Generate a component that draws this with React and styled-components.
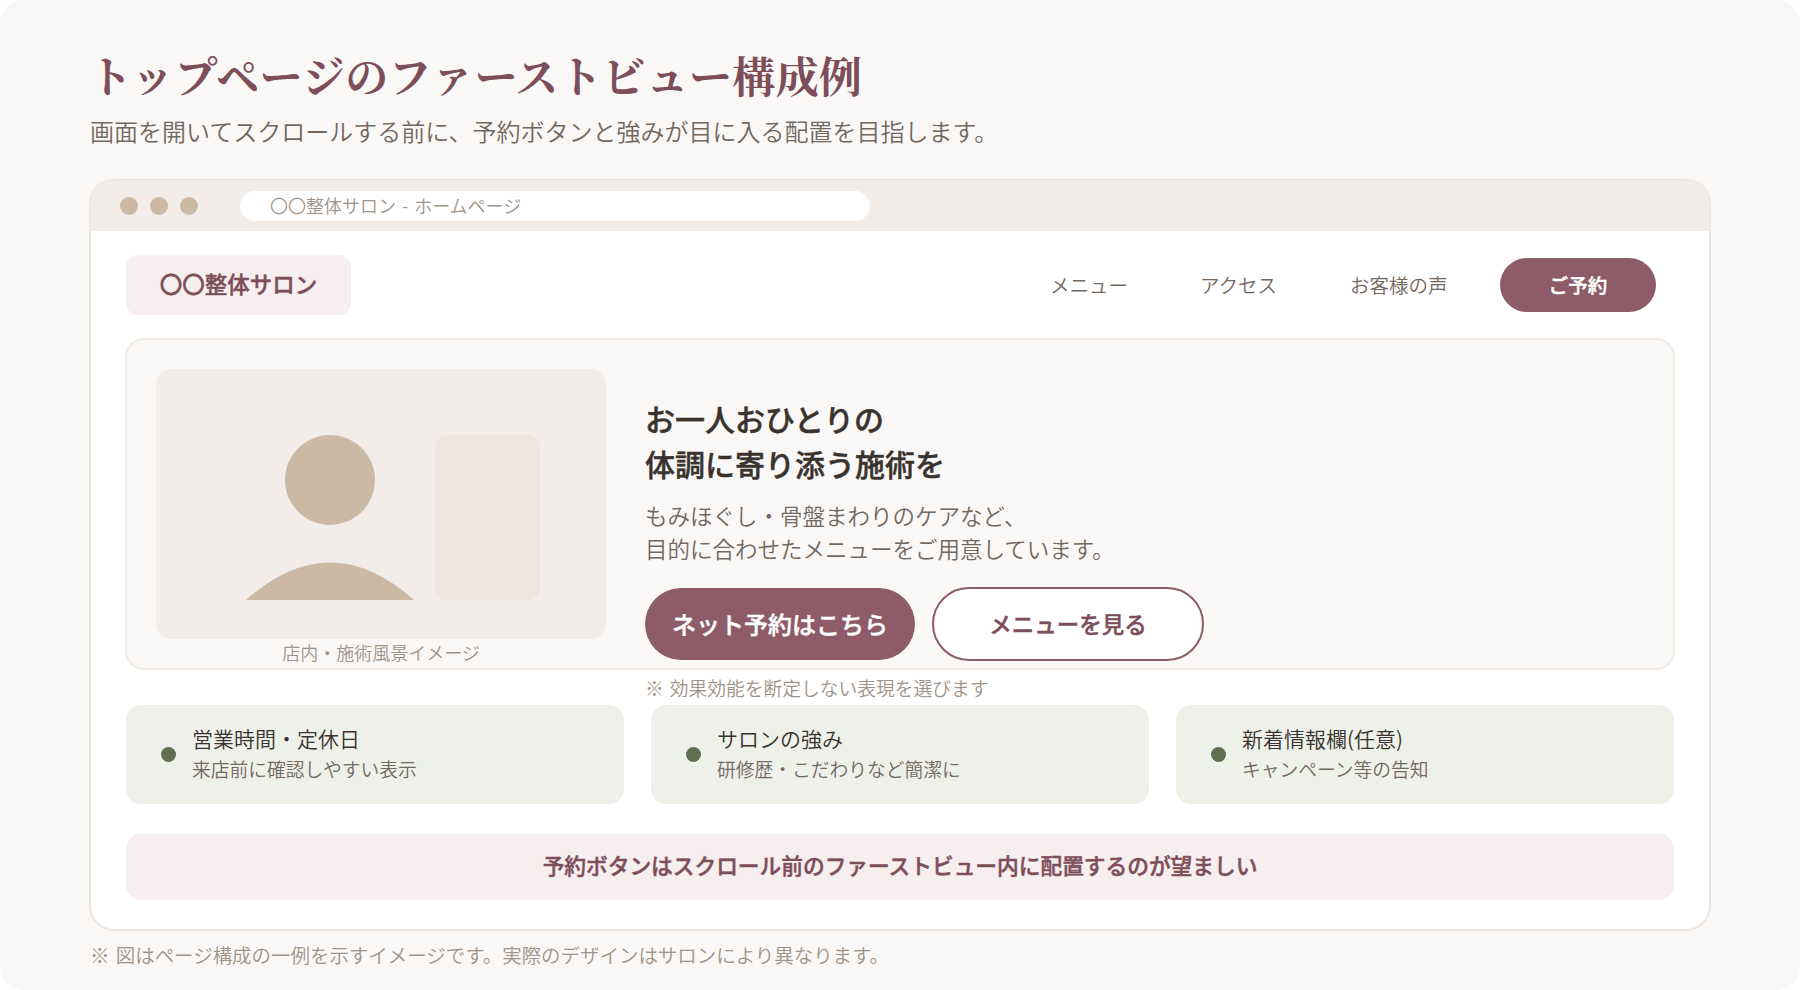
import React from "react";
import styled, { createGlobalStyle, css } from "styled-components";

const cards = [
  { title: "営業時間・定休日", text: "来店前に確認しやすい表示" },
  { title: "サロンの強み", text: "研修歴・こだわりなど簡潔に" },
  { title: "新着情報欄(任意)", text: "キャンペーン等の告知" },
];

const menus = ["メニュー", "アクセス", "お客様の声"];

function App() {
  return (
    <>
      <GlobalStyle />
      <Container>
        <Title>トップページのファーストビュー構成例</Title>
        <SubTitle>画面を開いてスクロールする前に、予約ボタンと強みが目に入る配置を目指します。</SubTitle>

        <Browser>
          <BrowserBar>
            <Dot />
            <Dot />
            <Dot />
            <AddressBar>〇〇整体サロン - ホームページ</AddressBar>
          </BrowserBar>

          <Header>
            <Logo>〇〇整体サロン</Logo>
            <Nav>
              {menus.map((m) => (
                <NavItem key={m}>{m}</NavItem>
              ))}
              <ReserveButton>ご予約</ReserveButton>
            </Nav>
          </Header>

          <Hero>
            <Figure>
              <Photo viewBox="0 0 450 270">
                <circle cx="174" cy="111" r="45" fill="#cbb8a5" />
                <path d="M90 231 Q174 156 258 231 Z" fill="#cbb8a5" />
                <rect x="279" y="66" width="105" height="165" rx="12" fill="#ede5e0" />
              </Photo>
              <Caption>店内・施術風景イメージ</Caption>
            </Figure>
            <HeroBody>
              <Headline>
                お一人おひとりの
                <br />
                体調に寄り添う施術を
              </Headline>
              <Lead>
                もみほぐし・骨盤まわりのケアなど、
                <br />
                目的に合わせたメニューをご用意しています。
              </Lead>
              <Buttons>
                <PillButton $primary>ネット予約はこちら</PillButton>
                <PillButton>メニューを見る</PillButton>
              </Buttons>
              <HeroNote>※ 効果効能を断定しない表現を選びます</HeroNote>
            </HeroBody>
          </Hero>

          <CardList>
            {cards.map((c) => (
              <Card key={c.title}>
                <CardDot />
                <CardBody>
                  <CardTitle>{c.title}</CardTitle>
                  <CardText>{c.text}</CardText>
                </CardBody>
              </Card>
            ))}
          </CardList>

          <Banner>予約ボタンはスクロール前のファーストビュー内に配置するのが望ましい</Banner>
        </Browser>

        <FootNote>※ 図はページ構成の一例を示すイメージです。実際のデザインはサロンにより異なります。</FootNote>
      </Container>
    </>
  );
}

const GlobalStyle = createGlobalStyle`
  * {
    box-sizing: border-box;
  }
  body {
    margin: 0;
    background-color: #ffffff;
    font-family: "Noto Sans CJK JP", sans-serif;
    font-weight: 350;
  }
`;

/* between medium and bold */
const semiBold = css`
  font-weight: 500;
  -webkit-text-stroke: 0.45px currentColor;
`;

const Container = styled.div`
  width: 1800px;
  height: 990px;
  padding: 45px 89px 0;
  background-color: #faf8f6;
  border-radius: 24px;
  overflow: hidden;
  white-space: nowrap;
`;

const Title = styled.h1`
  margin: 0;
  height: 60px;
  line-height: 59px;
  font-family: "Noto Serif CJK JP", "Noto Sans CJK JP", serif;
  font-size: 43px;
  font-weight: 700;
  letter-spacing: 0.35px;
  color: #7d4e5a;
`;

const SubTitle = styled.div`
  margin: 8px 0 30px 1px;
  height: 36px;
  line-height: 36px;
  font-size: 24px;
  color: #73685f;
`;

const Browser = styled.div`
  height: 752px;
  border: 2px solid #ece4de;
  border-radius: 25px;
  background-color: #ffffff;
`;

/* the bar lies on the inner half of the frame line */
const BrowserBar = styled.div`
  display: flex;
  align-items: center;
  gap: 12px;
  height: 51px;
  margin: -1px -1px 0;
  padding-left: 30px;
  border-radius: 24px 24px 0 0;
  background-color: #f2ede8;
`;

const Dot = styled.span`
  width: 18px;
  height: 18px;
  border-radius: 50%;
  background-color: #cbb8a5;
`;

const AddressBar = styled.div`
  width: 630px;
  height: 30px;
  margin-left: 30px;
  padding-left: 30px;
  line-height: 28px;
  border-radius: 15px;
  background-color: #ffffff;
  font-size: 18px;
  word-spacing: 0.11em;
  color: #9e9388;
`;

const Header = styled.div`
  display: flex;
  align-items: center;
  justify-content: space-between;
  margin: 24px 53px 23px 35px;
`;

const Logo = styled.div`
  width: 225px;
  height: 60px;
  line-height: 56px;
  text-align: center;
  border-radius: 12px;
  background-color: #f7eeef;
  font-size: 22.5px;
  ${semiBold}
  color: #7d4e5a;
`;

const Nav = styled.div`
  display: flex;
  align-items: center;
`;

const NavItem = styled.div`
  width: 150px;
  font-size: 19.5px;
  line-height: 54px;
  color: #73685f;
`;

const ReserveButton = styled.div`
  width: 156px;
  height: 54px;
  line-height: 53px;
  text-align: center;
  border-radius: 27px;
  background-color: #8e5c68;
  font-size: 19.5px;
  ${semiBold}
  color: #ffffff;
`;

const Hero = styled.div`
  display: flex;
  gap: 39px;
  height: 332px;
  margin: 0 34px;
  padding: 29px;
  border: 2px solid #f1ebe6;
  border-radius: 19px;
  background-color: #faf8f6;
`;

const Figure = styled.div`
  width: 450px;
`;

const Photo = styled.svg`
  display: block;
  width: 450px;
  height: 270px;
  border-radius: 15px;
  background-color: #f2ede8;
`;

const Caption = styled.div`
  line-height: 26px;
  text-align: center;
  font-size: 18px;
  color: #9e9388;
`;

const HeroBody = styled.div`
  padding-top: 27px;
`;

const Headline = styled.div`
  line-height: 45px;
  font-size: 30px;
  ${semiBold}
  color: #3a322d;
`;

const Lead = styled.div`
  margin-top: 12.5px;
  line-height: 33px;
  font-size: 22.5px;
  color: #73685f;
`;

const Buttons = styled.div`
  display: flex;
  align-items: center;
  gap: 17px;
  margin-top: 22.5px;
`;

const PillButton = styled.div`
  display: flex;
  align-items: center;
  justify-content: center;
  width: ${(props) => (props.$primary ? "270px" : "272px")};
  height: ${(props) => (props.$primary ? "72px" : "74px")};
  padding-bottom: 2px;
  border: ${(props) => (props.$primary ? "0" : "2px solid #8e5c68")};
  border-radius: 37px;
  background-color: ${(props) => (props.$primary ? "#8e5c68" : "#ffffff")};
  font-size: ${(props) => (props.$primary ? "24px" : "22.5px")};
  ${semiBold}
  color: ${(props) => (props.$primary ? "#ffffff" : "#7d4e5a")};
`;

const HeroNote = styled.div`
  margin-top: 13px;
  line-height: 28px;
  font-size: 18.75px;
  word-spacing: 0.1em;
  color: #9e9388;
`;

const CardList = styled.div`
  display: grid;
  grid-template-columns: repeat(3, 498px);
  gap: 27px;
  margin: 35px 35px 30px;
`;

const Card = styled.div`
  display: flex;
  align-items: center;
  gap: 16.5px;
  height: 99px;
  padding-left: 34.5px;
  border-radius: 15px;
  background-color: #eef1ea;
`;

const CardDot = styled.span`
  width: 15px;
  height: 15px;
  border-radius: 50%;
  background-color: #5f6f4f;
`;

const CardBody = styled.div`
  padding-bottom: 2px;
`;

const CardTitle = styled.div`
  line-height: 31px;
  font-size: 21px;
  color: #3a322d;
`;

const CardText = styled.div`
  line-height: 30px;
  font-size: 18.75px;
  color: #73685f;
`;

const Banner = styled.div`
  height: 66px;
  line-height: 62px;
  margin: 0 35px;
  text-align: center;
  border-radius: 15px;
  background-color: #f7eeef;
  font-size: 21.75px;
  ${semiBold}
  letter-spacing: -0.06px;
  color: #7d4e5a;
`;

const FootNote = styled.div`
  margin: 9px 0 0 1px;
  line-height: 30px;
  font-size: 19.5px;
  letter-spacing: -0.04px;
  word-spacing: 0.1em;
  color: #9e9388;
`;

export default App;
